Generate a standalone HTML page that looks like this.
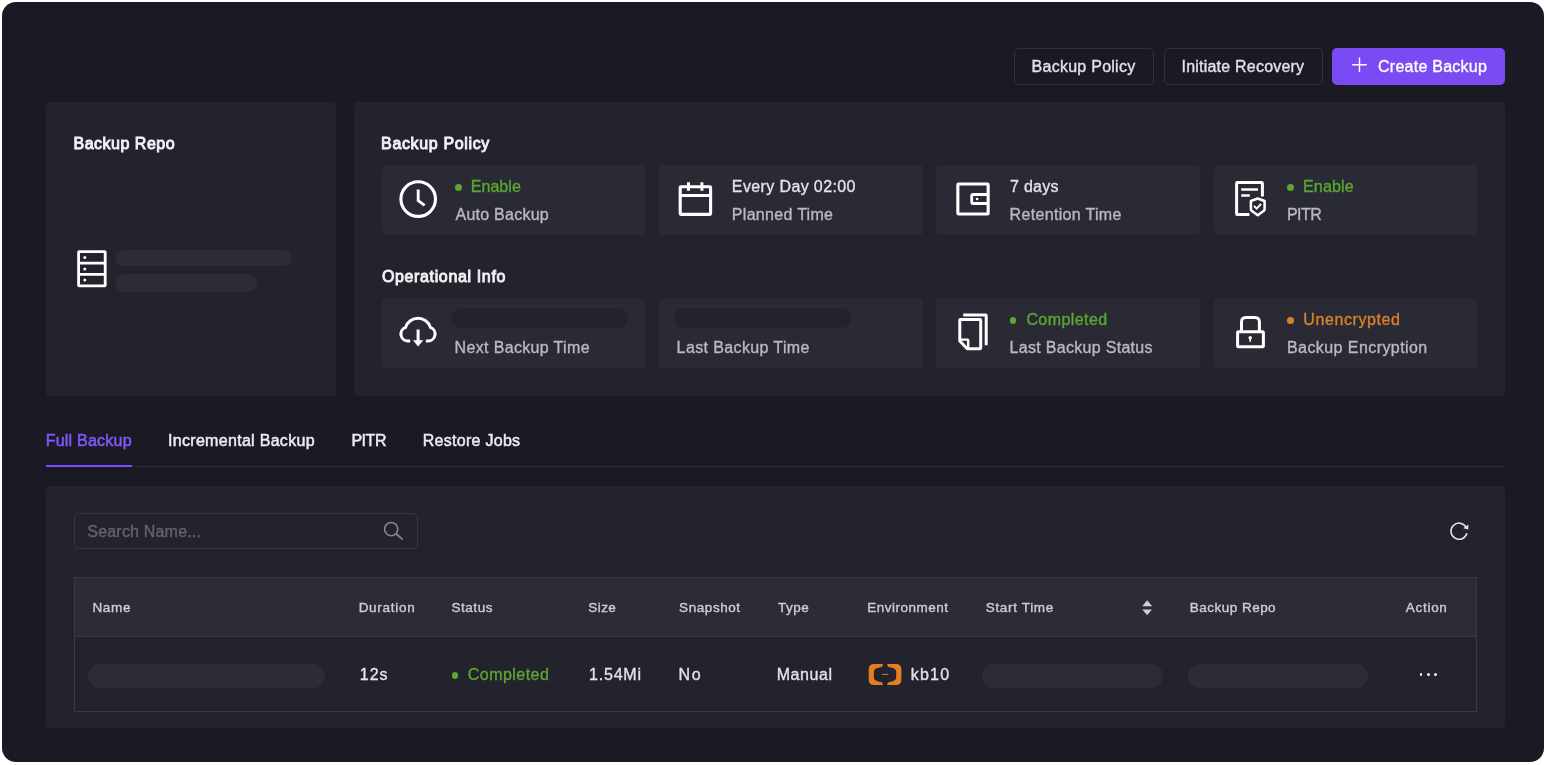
<!DOCTYPE html>
<html lang="en"><head><meta charset="utf-8"><title>Backups</title>
<style>
html,body{margin:0;padding:0;background:#fff;}
body{width:1546px;height:765px;position:relative;overflow:hidden;font-family:"Liberation Sans",Arial,sans-serif;}
.b{position:absolute;display:block;}
.t{position:absolute;white-space:nowrap;display:block;}
#root{position:absolute;left:0;top:0;width:1546px;height:765px;will-change:transform;}
</style></head><body><div id="root">
<div class="b" style="left:2.10px;top:2.00px;width:1541.90px;height:760.00px;background:#1a1a24;border-radius:14px;"></div>
<div class="b" style="left:1014.00px;top:48.00px;width:140.00px;height:36.50px;background:transparent;border-radius:5px;box-sizing:border-box;border:1px solid #31323c;"></div>
<span class="t " style="left:1031.56px;top:56.00px;font-size:16px;line-height:21px;letter-spacing:0.263px;color:#e2e2e6;-webkit-text-stroke:0.35px #e2e2e6;">Backup Policy</span>
<div class="b" style="left:1163.50px;top:48.00px;width:159.10px;height:36.50px;background:transparent;border-radius:5px;box-sizing:border-box;border:1px solid #31323c;"></div>
<span class="t " style="left:1181.55px;top:56.00px;font-size:16px;line-height:21px;letter-spacing:0.212px;color:#e2e2e6;-webkit-text-stroke:0.35px #e2e2e6;">Initiate Recovery</span>
<div class="b" style="left:1332.00px;top:47.60px;width:173.00px;height:37.40px;background:#7a4bf3;border-radius:5px;"></div>
<svg class="b" style="left:1352px;top:57px;width:15px;height:15.4px" viewBox="0 0 15 15.4"><path d="M7.5 0.4V15M0.2 7.7H14.8" stroke="#fff" stroke-width="1.4" fill="none"/></svg>
<span class="t " style="left:1377.99px;top:56.00px;font-size:16px;line-height:21px;letter-spacing:0.259px;color:#ffffff;-webkit-text-stroke:0.35px #ffffff;">Create Backup</span>
<div class="b" style="left:45.60px;top:102.40px;width:290.00px;height:293.70px;background:#23232e;border-radius:4px;"></div>
<div class="b" style="left:353.80px;top:102.40px;width:1151.30px;height:293.70px;background:#23232e;border-radius:4px;"></div>
<span class="t " style="left:73.48px;top:133.00px;font-size:16px;line-height:21px;letter-spacing:0.507px;color:#f2f2f4;-webkit-text-stroke:0.9px #f2f2f4;">Backup Repo</span>
<span class="t " style="left:381.08px;top:133.00px;font-size:16px;line-height:21px;letter-spacing:0.650px;color:#f2f2f4;-webkit-text-stroke:0.9px #f2f2f4;">Backup Policy</span>
<span class="t " style="left:381.90px;top:266.00px;font-size:16px;line-height:21px;letter-spacing:0.643px;color:#f2f2f4;-webkit-text-stroke:0.9px #f2f2f4;">Operational Info</span>
<svg class="b" style="left:77px;top:250px;width:30px;height:37.5px" viewBox="0 0 30 37.5"><g fill="none" stroke="#fff" stroke-width="2.8"><rect x="1.6" y="1.6" width="26.6" height="34.2" rx="0.6"/><path d="M1.6 13.2H28.2M1.6 24.4H28.2"/></g><g fill="#fff"><circle cx="7.8" cy="7.6" r="1.5"/><circle cx="7.8" cy="18.9" r="1.5"/><circle cx="7.8" cy="30.1" r="1.5"/></g></svg>
<div class="b" style="left:115.00px;top:249.80px;width:177.30px;height:16.40px;background:#2b2c36;border-radius:9px;"></div>
<div class="b" style="left:115.00px;top:273.90px;width:141.50px;height:18.10px;background:#2b2c36;border-radius:9px;"></div>
<div class="b" style="left:381.60px;top:164.80px;width:263.50px;height:70.30px;background:#292a34;border-radius:4px;"></div>
<div class="b" style="left:381.60px;top:297.90px;width:263.50px;height:70.30px;background:#292a34;border-radius:4px;"></div>
<div class="b" style="left:659.00px;top:164.80px;width:263.50px;height:70.30px;background:#292a34;border-radius:4px;"></div>
<div class="b" style="left:659.00px;top:297.90px;width:263.50px;height:70.30px;background:#292a34;border-radius:4px;"></div>
<div class="b" style="left:936.40px;top:164.80px;width:263.50px;height:70.30px;background:#292a34;border-radius:4px;"></div>
<div class="b" style="left:936.40px;top:297.90px;width:263.50px;height:70.30px;background:#292a34;border-radius:4px;"></div>
<div class="b" style="left:1213.80px;top:164.80px;width:263.50px;height:70.30px;background:#292a34;border-radius:4px;"></div>
<div class="b" style="left:1213.80px;top:297.90px;width:263.50px;height:70.30px;background:#292a34;border-radius:4px;"></div>
<div class="b" style="left:455.10px;top:184.20px;width:6.60px;height:6.60px;background:#5aa731;border-radius:6.6px;"></div>
<span class="t " style="left:470.76px;top:176.00px;font-size:16px;line-height:21px;letter-spacing:0.051px;color:#5aa731;-webkit-text-stroke:0.35px #5aa731;">Enable</span>
<span class="t " style="left:455.58px;top:204.00px;font-size:16px;line-height:21px;letter-spacing:0.236px;color:#b9b9be;-webkit-text-stroke:0.35px #b9b9be;">Auto Backup</span>
<span class="t " style="left:731.84px;top:176.00px;font-size:16px;line-height:21px;letter-spacing:0.379px;color:#e2e2e6;-webkit-text-stroke:0.35px #e2e2e6;">Every Day 02:00</span>
<span class="t " style="left:731.83px;top:204.00px;font-size:16px;line-height:21px;letter-spacing:0.303px;color:#b9b9be;-webkit-text-stroke:0.35px #b9b9be;">Planned Time</span>
<span class="t " style="left:1010.02px;top:176.00px;font-size:16px;line-height:21px;letter-spacing:0.286px;color:#e2e2e6;-webkit-text-stroke:0.35px #e2e2e6;">7 days</span>
<span class="t " style="left:1009.62px;top:204.00px;font-size:16px;line-height:21px;letter-spacing:0.316px;color:#b9b9be;-webkit-text-stroke:0.35px #b9b9be;">Retention Time</span>
<div class="b" style="left:1287.20px;top:184.20px;width:6.60px;height:6.60px;background:#5aa731;border-radius:6.6px;"></div>
<span class="t " style="left:1303.03px;top:176.00px;font-size:16px;line-height:21px;letter-spacing:0.145px;color:#5aa731;-webkit-text-stroke:0.35px #5aa731;">Enable</span>
<span class="t " style="left:1287.03px;top:204.00px;font-size:16px;line-height:21px;letter-spacing:-0.588px;color:#b9b9be;-webkit-text-stroke:0.35px #b9b9be;">PITR</span>
<div class="b" style="left:451.00px;top:308.20px;width:177.00px;height:20.20px;background:#23232e;border-radius:10.1px;"></div>
<span class="t " style="left:454.62px;top:337.00px;font-size:16px;line-height:21px;letter-spacing:0.343px;color:#b9b9be;-webkit-text-stroke:0.35px #b9b9be;">Next Backup Time</span>
<div class="b" style="left:673.70px;top:308.20px;width:176.90px;height:20.20px;background:#23232e;border-radius:10.1px;"></div>
<span class="t " style="left:676.62px;top:337.00px;font-size:16px;line-height:21px;letter-spacing:0.379px;color:#b9b9be;-webkit-text-stroke:0.35px #b9b9be;">Last Backup Time</span>
<div class="b" style="left:1009.70px;top:317.00px;width:6.60px;height:6.60px;background:#5aa731;border-radius:6.6px;"></div>
<span class="t " style="left:1026.40px;top:309.00px;font-size:16px;line-height:21px;letter-spacing:0.426px;color:#5aa731;-webkit-text-stroke:0.35px #5aa731;">Completed</span>
<span class="t " style="left:1009.62px;top:337.00px;font-size:16px;line-height:21px;letter-spacing:0.300px;color:#b9b9be;-webkit-text-stroke:0.35px #b9b9be;">Last Backup Status</span>
<div class="b" style="left:1287.20px;top:317.00px;width:6.60px;height:6.60px;background:#d9822b;border-radius:6.6px;"></div>
<span class="t " style="left:1303.25px;top:309.00px;font-size:16px;line-height:21px;letter-spacing:0.603px;color:#d9822b;-webkit-text-stroke:0.35px #d9822b;">Unencrypted</span>
<span class="t " style="left:1287.03px;top:337.00px;font-size:16px;line-height:21px;letter-spacing:0.425px;color:#b9b9be;-webkit-text-stroke:0.35px #b9b9be;">Backup Encryption</span>
<svg class="b" style="left:396px;top:177px;width:44px;height:44px" viewBox="396 177 44 44"><g fill="none" stroke="#fff"><circle cx="418.2" cy="199.1" r="17.3" stroke-width="3.1"/><path d="M418.2 189.6V200.6L424.6 205.4" stroke-width="2.9"/></g></svg>
<svg class="b" style="left:674px;top:178px;width:44px;height:42px" viewBox="674 178 44 42"><g fill="none" stroke="#fff"><rect x="680.2" y="186.8" width="30.4" height="27.6" rx="0.8" stroke-width="3.1"/><path d="M680.2 195.5H710.6" stroke-width="3"/><path d="M688.5 182.2V190.8M701.9 182.2V190.8" stroke-width="3"/></g></svg>
<svg class="b" style="left:952px;top:178px;width:44px;height:42px" viewBox="952 178 44 42"><g fill="none" stroke="#fff"><rect x="957.85" y="184.05" width="30.3" height="30" rx="0.8" stroke-width="3.1"/><path d="M988 194.5H973.2Q971.7 194.5 971.7 196V202Q971.7 203.5 973.2 203.5H988" stroke-width="2.8"/></g><circle cx="977.1" cy="199" r="1.35" fill="#fff"/></svg>
<svg class="b" style="left:1230px;top:177px;width:44px;height:44px" viewBox="1230 177 44 44"><g fill="none" stroke="#fff"><path d="M1249.4 214.5H1237.4Q1236.6 214.5 1236.6 213.7V183.4Q1236.6 182.6 1237.4 182.6H1261.6Q1262.4 182.6 1262.4 183.4V196.4" stroke-width="3"/><path d="M1241.2 189.5H1258M1241.2 195.5H1249.8" stroke-width="2.7"/><path d="M1257.75 198.5L1264.6 201V209.3Q1264.6 210.2 1263.9 210.7L1257.75 215.3L1251.6 210.7Q1250.9 210.2 1250.9 209.3V201Z" stroke-width="2.5" stroke-linejoin="round"/><path d="M1254 205.9L1256.6 208.6L1261.1 203.9" stroke-width="2"/></g></svg>
<svg class="b" style="left:396px;top:310px;width:44px;height:44px" viewBox="396 310 44 44"><path d="M410.2 341H408A7 7 0 0 1 405.6 327.4A13 13 0 0 1 430.4 327.4A7 7 0 0 1 428 341H425.9" fill="none" stroke="#fff" stroke-width="3"/><path d="M418.1 329.5V341" stroke="#fff" stroke-width="3" fill="none"/><path d="M412.9 340.2H423.3L418.1 346.4Z" fill="#fff"/></svg>
<svg class="b" style="left:952px;top:310px;width:44px;height:44px" viewBox="952 310 44 44"><g fill="none" stroke="#fff" stroke-width="3" stroke-linejoin="round"><path d="M963.2 315.1H985.6Q986.2 315.1 986.2 315.7V345.2"/><path d="M960.4 319.6H980.1Q980.7 319.6 980.7 320.2V348.1Q980.7 348.7 980.1 348.7H967.2L959.8 341V320.2Q959.8 319.6 960.4 319.6Z"/><path d="M960.2 339.6H967.6Q968.2 339.6 968.2 340.2V348.3" stroke-width="2.4"/></g></svg>
<svg class="b" style="left:1230px;top:310px;width:44px;height:44px" viewBox="1230 310 44 44"><g fill="none" stroke="#fff" stroke-width="3"><rect x="1237.6" y="331.7" width="25.8" height="15.1" rx="0.8"/><path d="M1241.5 331.5V322Q1241.5 317.5 1246 317.5H1254.9Q1259.4 317.5 1259.4 322V331.5"/></g><circle cx="1250.2" cy="337.7" r="1.7" fill="#fff"/><rect x="1249.4" y="337.7" width="1.6" height="4" fill="#fff"/></svg>

<div class="b" style="left:45.70px;top:466.20px;width:1459.50px;height:1.00px;background:#2b2c36;border-radius:0px;"></div>
<div class="b" style="left:45.90px;top:464.70px;width:86.10px;height:2.60px;background:#7c4dff;border-radius:0px;"></div>
<span class="t " style="left:45.63px;top:430.00px;font-size:16px;line-height:21px;letter-spacing:0.236px;color:#8457ff;-webkit-text-stroke:0.5px #8457ff;">Full Backup</span>
<span class="t " style="left:168.02px;top:430.00px;font-size:16px;line-height:21px;letter-spacing:0.303px;color:#ececf0;-webkit-text-stroke:0.5px #ececf0;">Incremental Backup</span>
<span class="t " style="left:351.40px;top:430.00px;font-size:16px;line-height:21px;letter-spacing:-0.448px;color:#ececf0;-webkit-text-stroke:0.5px #ececf0;">PITR</span>
<span class="t " style="left:422.69px;top:430.00px;font-size:16px;line-height:21px;letter-spacing:0.288px;color:#ececf0;-webkit-text-stroke:0.5px #ececf0;">Restore Jobs</span>
<div class="b" style="left:45.70px;top:485.70px;width:1459.50px;height:242.10px;background:#23232e;border-radius:4px;"></div>
<div class="b" style="left:74.00px;top:512.80px;width:343.90px;height:36.20px;background:transparent;border-radius:5px;box-sizing:border-box;border:1px solid #363740;"></div>
<span class="t " style="left:87.33px;top:521.00px;font-size:16px;line-height:21px;letter-spacing:0.189px;color:#63646c;-webkit-text-stroke:0.35px #63646c;">Search Name...</span>
<svg class="b" style="left:383.4px;top:520.9px;width:21px;height:20px" viewBox="0 0 21 20"><circle cx="8.2" cy="8.1" r="6.6" fill="none" stroke="#85868c" stroke-width="1.6"/><path d="M13 12.8L19.8 18.6" stroke="#85868c" stroke-width="1.8" fill="none"/></svg>
<svg class="b" style="left:1448px;top:520px;width:24px;height:24px" viewBox="1448 520 24 24"><path d="M1466.1 527.15A8.1 8.1 0 1 0 1466.9 533.3" fill="none" stroke="#e6e6ea" stroke-width="1.55"/><path d="M1468.3 524.4V529.5L1463.3 528.2Z" fill="#e6e6ea"/></svg>
<div class="b" style="left:74.50px;top:577.50px;width:1402.40px;height:59.40px;background:#2b2c36;border-radius:0px;"></div>
<div class="b" style="left:74.00px;top:577.00px;width:1403.40px;height:1.00px;background:#393a44;border-radius:0px;"></div>
<div class="b" style="left:74.00px;top:636.40px;width:1403.40px;height:1.00px;background:#393a44;border-radius:0px;"></div>
<div class="b" style="left:74.00px;top:710.80px;width:1403.40px;height:1.00px;background:#393a44;border-radius:0px;"></div>
<div class="b" style="left:74.00px;top:577.00px;width:1.00px;height:134.80px;background:#393a44;border-radius:0px;"></div>
<div class="b" style="left:1476.40px;top:577.00px;width:1.00px;height:134.80px;background:#393a44;border-radius:0px;"></div>
<span class="t " style="left:92.41px;top:598.00px;font-size:13.5px;line-height:19px;letter-spacing:0.683px;color:#cdcdd2;-webkit-text-stroke:0.38px #cdcdd2;">Name</span>
<span class="t " style="left:358.64px;top:598.00px;font-size:13.5px;line-height:19px;letter-spacing:0.740px;color:#cdcdd2;-webkit-text-stroke:0.38px #cdcdd2;">Duration</span>
<span class="t " style="left:451.51px;top:598.00px;font-size:13.5px;line-height:19px;letter-spacing:0.537px;color:#cdcdd2;-webkit-text-stroke:0.38px #cdcdd2;">Status</span>
<span class="t " style="left:588.28px;top:598.00px;font-size:13.5px;line-height:19px;letter-spacing:0.432px;color:#cdcdd2;-webkit-text-stroke:0.38px #cdcdd2;">Size</span>
<span class="t " style="left:679.08px;top:598.00px;font-size:13.5px;line-height:19px;letter-spacing:0.570px;color:#cdcdd2;-webkit-text-stroke:0.38px #cdcdd2;">Snapshot</span>
<span class="t " style="left:778.00px;top:598.00px;font-size:13.5px;line-height:19px;letter-spacing:0.525px;color:#cdcdd2;-webkit-text-stroke:0.38px #cdcdd2;">Type</span>
<span class="t " style="left:867.21px;top:598.00px;font-size:13.5px;line-height:19px;letter-spacing:0.511px;color:#cdcdd2;-webkit-text-stroke:0.38px #cdcdd2;">Environment</span>
<span class="t " style="left:985.80px;top:598.00px;font-size:13.5px;line-height:19px;letter-spacing:0.656px;color:#cdcdd2;-webkit-text-stroke:0.38px #cdcdd2;">Start Time</span>
<span class="t " style="left:1189.80px;top:598.00px;font-size:13.5px;line-height:19px;letter-spacing:0.478px;color:#cdcdd2;-webkit-text-stroke:0.38px #cdcdd2;">Backup Repo</span>
<span class="t " style="left:1405.70px;top:598.00px;font-size:13.5px;line-height:19px;letter-spacing:0.734px;color:#cdcdd2;-webkit-text-stroke:0.38px #cdcdd2;">Action</span>
<svg class="b" style="left:1142px;top:600px;width:10.4px;height:15.4px" viewBox="0 0 10.4 15.4"><path d="M5.2 0.3L10.2 6.2H0.2Z" fill="#cfcfd4"/><path d="M5.2 15.1L10.2 9.4H0.2Z" fill="#cfcfd4"/></svg>
<div class="b" style="left:88.00px;top:663.80px;width:237.20px;height:24.00px;background:#2b2c36;border-radius:12px;"></div>
<span class="t " style="left:359.86px;top:664.00px;font-size:16px;line-height:21px;letter-spacing:0.967px;color:#e2e2e6;-webkit-text-stroke:0.35px #e2e2e6;">12s</span>
<div class="b" style="left:451.50px;top:672.20px;width:6.60px;height:6.60px;background:#5aa731;border-radius:6.6px;"></div>
<span class="t " style="left:467.78px;top:664.00px;font-size:16px;line-height:21px;letter-spacing:0.468px;color:#5aa731;-webkit-text-stroke:0.35px #5aa731;">Completed</span>
<span class="t " style="left:589.12px;top:664.00px;font-size:16px;line-height:21px;letter-spacing:0.771px;color:#e2e2e6;-webkit-text-stroke:0.35px #e2e2e6;">1.54Mi</span>
<span class="t " style="left:678.55px;top:664.00px;font-size:16px;line-height:21px;letter-spacing:1.567px;color:#e2e2e6;-webkit-text-stroke:0.35px #e2e2e6;">No</span>
<span class="t " style="left:776.63px;top:664.00px;font-size:16px;line-height:21px;letter-spacing:0.603px;color:#e2e2e6;-webkit-text-stroke:0.35px #e2e2e6;">Manual</span>
<svg class="b" style="left:867px;top:662px;width:37px;height:26px" viewBox="867 662 37 26"><g fill="#e67d22"><path d="M883.1 664.1H874.2Q868.7 664.1 868.7 669.6V679.6Q868.7 685.1 874.2 685.1H883.1L882.1 682.5L877.5 681.3Q873.9 680.3 873.9 677.6V671.6Q873.9 668.9 877.5 667.9L882.1 666.7Z"/><path d="M887 664.1H895.9Q901.4 664.1 901.4 669.6V679.6Q901.4 685.1 895.9 685.1H887L888 682.5L892.6 681.3Q896.2 680.3 896.2 677.6V671.6Q896.2 668.9 892.6 667.9L888 666.7Z"/><rect x="881.8" y="673.9" width="6.4" height="1.05" opacity="0.9"/></g></svg>

<span class="t " style="left:910.79px;top:664.00px;font-size:16px;line-height:21px;letter-spacing:1.203px;color:#e2e2e6;-webkit-text-stroke:0.35px #e2e2e6;">kb10</span>
<div class="b" style="left:981.60px;top:663.80px;width:181.00px;height:24.00px;background:#2b2c36;border-radius:12px;"></div>
<div class="b" style="left:1187.70px;top:663.80px;width:180.70px;height:24.00px;background:#2b2c36;border-radius:12px;"></div>
<div class="b" style="left:1419.75px;top:673.15px;width:2.70px;height:2.70px;background:#f0f0f2;border-radius:2.7px;"></div>
<div class="b" style="left:1426.95px;top:673.15px;width:2.70px;height:2.70px;background:#f0f0f2;border-radius:2.7px;"></div>
<div class="b" style="left:1434.15px;top:673.15px;width:2.70px;height:2.70px;background:#f0f0f2;border-radius:2.7px;"></div>
</div></body></html>
